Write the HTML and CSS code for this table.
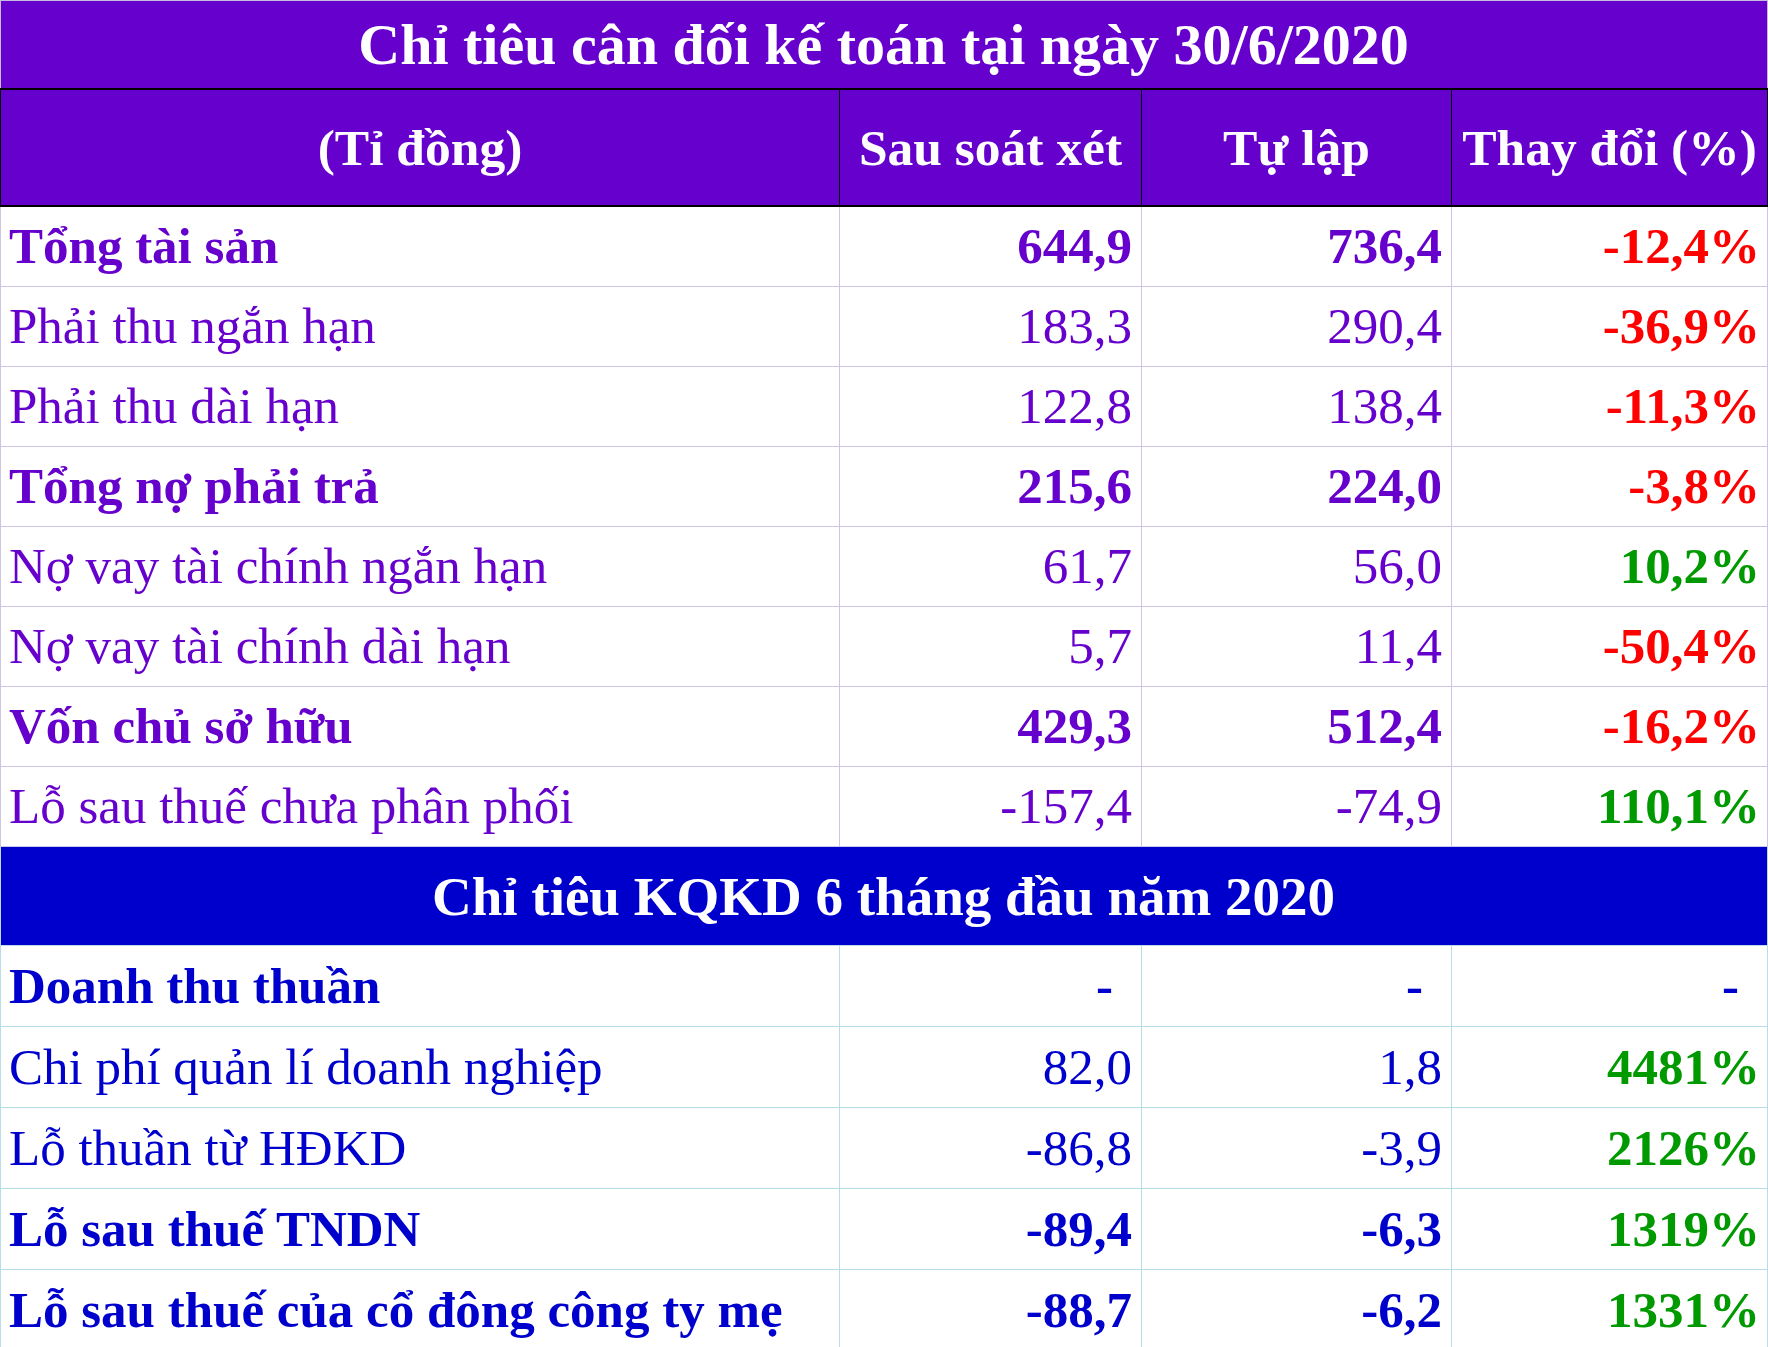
FILE: index.html
```html
<!DOCTYPE html>
<html lang="vi">
<head>
<meta charset="utf-8">
<link rel="stylesheet" href="styles.css">
</head>
<body>
<table class="sheet">
  <colgroup>
    <col class="c1"><col class="c2"><col class="c3"><col class="c4">
  </colgroup>
  <tr class="title"><td colspan="4">Chỉ tiêu cân đối kế toán tại ngày 30/6/2020</td></tr>
  <tr class="head">
    <td>(Tỉ đồng)</td><td>Sau soát xét</td><td>Tự lập</td><td>Thay đổi (%)</td>
  </tr>
  <tr class="row p b"><td class="lbl">Tổng tài sản</td><td>644,9</td><td>736,4</td><td class="neg">-12,4%</td></tr>
  <tr class="row p"><td class="lbl">Phải thu ngắn hạn</td><td>183,3</td><td>290,4</td><td class="neg">-36,9%</td></tr>
  <tr class="row p"><td class="lbl">Phải thu dài hạn</td><td>122,8</td><td>138,4</td><td class="neg">-11,3%</td></tr>
  <tr class="row p b"><td class="lbl">Tổng nợ phải trả</td><td>215,6</td><td>224,0</td><td class="neg">-3,8%</td></tr>
  <tr class="row p"><td class="lbl">Nợ vay tài chính ngắn hạn</td><td>61,7</td><td>56,0</td><td class="pos">10,2%</td></tr>
  <tr class="row p"><td class="lbl">Nợ vay tài chính dài hạn</td><td>5,7</td><td>11,4</td><td class="neg">-50,4%</td></tr>
  <tr class="row p b"><td class="lbl">Vốn chủ sở hữu</td><td>429,3</td><td>512,4</td><td class="neg">-16,2%</td></tr>
  <tr class="row p"><td class="lbl">Lỗ sau thuế chưa phân phối</td><td>-157,4</td><td>-74,9</td><td class="pos">110,1%</td></tr>
  <tr class="band"><td colspan="4">Chỉ tiêu KQKD 6 tháng đầu năm 2020</td></tr>
  <tr class="row q b"><td class="lbl">Doanh thu thuần</td><td class="dash">-</td><td class="dash">-</td><td class="dash">-</td></tr>
  <tr class="row q"><td class="lbl">Chi phí quản lí doanh nghiệp</td><td>82,0</td><td>1,8</td><td class="pos">4481%</td></tr>
  <tr class="row q"><td class="lbl">Lỗ thuần từ HĐKD</td><td>-86,8</td><td>-3,9</td><td class="pos">2126%</td></tr>
  <tr class="row q b"><td class="lbl">Lỗ sau thuế TNDN</td><td>-89,4</td><td>-6,3</td><td class="pos">1319%</td></tr>
  <tr class="row q b last"><td class="lbl">Lỗ sau thuế của cổ đông công ty mẹ</td><td>-88,7</td><td>-6,2</td><td class="pos">1331%</td></tr>
</table>
</body>
</html>
```
FILE: styles.css
```css
html, body {
  margin: 0;
  padding: 0;
  background: #ffffff;
}
.sheet {
  border-collapse: collapse;
  table-layout: fixed;
  width: 1767px;
  font-family: "Liberation Serif", "DejaVu Serif", serif;
  font-size: 51px;
  line-height: 1;
}
.c1 { width: 839px; }
.c2 { width: 302px; }
.c3 { width: 310px; }
.c4 { width: 316px; }
.sheet td {
  padding: 0 9px 0 8px;
  white-space: nowrap;
  overflow: hidden;
  vertical-align: middle;
}
.title td {
  height: 87px;
  background: #6600cc;
  color: #ffffff;
  font-weight: bold;
  text-align: center;
  border: 1px solid #c8bde0;
  border-bottom: 2px solid #000000;
  font-size: 58px;
}
.head td {
  height: 115px;
  background: #6600cc;
  color: #ffffff;
  font-weight: bold;
  text-align: center;
  border: 1px solid #000000;
  border-bottom: 2px solid #000000;
  padding: 0;
  font-size: 51.5px;
}
.row td {
  height: 79px;
  text-align: right;
}
.row td.lbl { text-align: left; }
.row.p td {
  color: #6600cc;
  border: 1px solid #cfc4e6;
}
.row.q td {
  color: #0000cc;
  border: 1px solid #b8dde8;
  height: 80px;
}
.row.b td { font-weight: bold; }
.row td.neg { color: #ff0000; font-weight: bold; padding-right: 7px; }
.row td.pos { color: #009900; font-weight: bold; padding-right: 7px; }
.row td.dash { padding-right: 28px; }
.band td {
  height: 98px;
  background: #0000cc;
  color: #ffffff;
  font-weight: bold;
  text-align: center;
  border: 1px solid #b8dde8;
  font-size: 55px;
}
```
